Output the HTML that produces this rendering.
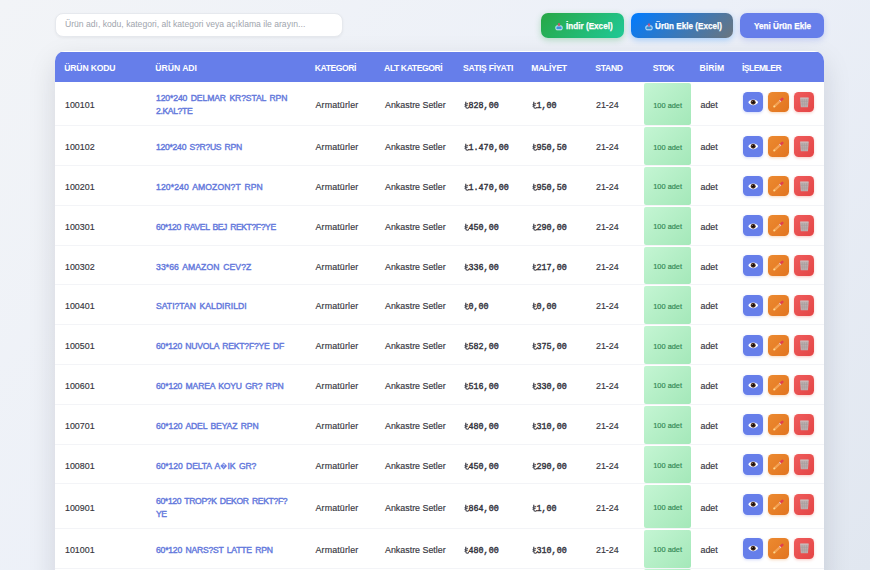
<!DOCTYPE html>
<html><head><meta charset="utf-8">
<style>
*{box-sizing:border-box;margin:0;padding:0}
html,body{width:870px;height:570px;overflow:hidden}
body{font-family:"Liberation Sans",sans-serif;background:linear-gradient(135deg,#f2f4f7 0%,#ecf0f8 50%,#e1e7f0 100%);position:relative;color:#333}
.search{position:absolute;left:55px;top:13.2px;width:287.5px;height:24.3px;background:#fff;border-radius:8px;box-shadow:0 1px 3px rgba(0,0,0,.05);border:1px solid #e6e9ee;font-size:8.6px;color:#a0a5ad;padding-left:9px;line-height:20.6px;white-space:nowrap}
.btn{position:absolute;top:13px;height:25px;border-radius:7px;color:#fff;font-weight:bold;font-size:9.6px;line-height:25px;white-space:nowrap}
.btn .ic{position:absolute;top:8.5px}
.btn .tx{position:absolute;top:-.5px;transform-origin:0 50%;transform:scaleX(.85);-webkit-text-stroke:.25px #fff}
.b1{left:541px;width:83px;background:linear-gradient(135deg,#28a745,#20c997);box-shadow:0 2px 6px rgba(40,167,69,.3)}
.b2{left:631px;width:102px;background:linear-gradient(135deg,#007bff,#6c757d);box-shadow:0 2px 6px rgba(0,123,255,.3)}
.b3{left:740px;width:84px;background:#667eea;box-shadow:0 2px 6px rgba(102,126,234,.3)}
.card{position:absolute;left:55px;top:51.3px;width:769px;height:540px;background:#fff;border-radius:10px;overflow:hidden;box-shadow:0 10px 28px rgba(20,25,40,.13)}
.head{position:absolute;left:0;top:1px;width:100%;height:29.4px;background:#667eea;color:#fff;font-weight:bold;font-size:8.6px;letter-spacing:-.15px}
.head span{position:absolute;top:11.5px;line-height:9px;white-space:nowrap}
.row{position:absolute;left:0;width:100%;border-bottom:1px solid #f3f4f7}
.row .c{position:absolute;white-space:nowrap}
.head span,.row .c,.stok,.acts{margin-left:0}
.tl{vertical-align:-.6px}
.dia{vertical-align:-1px}
.t{font-size:8.9px;color:#363640;line-height:10px;-webkit-text-stroke:.15px #363640}
.arm{letter-spacing:.14px}
.nm{color:#6479dc;font-weight:normal;font-size:8.6px;letter-spacing:.05px;word-spacing:1.2px;-webkit-text-stroke:.4px #6479dc;line-height:13px}
.mono{font-family:"Liberation Mono",monospace;font-weight:normal;font-size:8.4px;color:#34343e;-webkit-text-stroke:.4px #34343e;line-height:10px}
.stok{position:absolute;left:589.3px;width:46.7px;top:1px;bottom:0;background:linear-gradient(135deg,#c4f5d3,#a4e8b9);border-radius:2px;color:#318652;font-size:7.4px;-webkit-text-stroke:.15px #318652;display:flex;align-items:center;justify-content:center;padding-top:2px}
.acts{position:absolute;left:688px;height:20.4px;width:72px}
.ab{position:absolute;top:-.2px;width:20.4px;height:20.8px;border-radius:4.5px;display:block}
.ab svg{position:absolute;left:0;top:.2px;width:20.4px;height:20.4px}
.ab.v{left:0;background:#667eea;box-shadow:0 1px 3px rgba(102,126,234,.3)}
.ab.e{left:25.2px;background:linear-gradient(135deg,#ec8a30,#e2741f);box-shadow:0 1px 3px rgba(230,126,34,.3)}
.ab.d{left:50.6px;background:linear-gradient(135deg,#ef5b5b,#e44545);box-shadow:0 1px 3px rgba(231,76,60,.3)}
</style></head><body>
<div class="search">Ürün adı, kodu, kategori, alt kategori veya açıklama ile arayın...</div>
<div class="btn b1"><span class="tx" style="left:25px">İndir (Excel)</span><svg class="ic" style="left:13.8px" width="8" height="9" viewBox="0 0 8 9"><rect x="0.9" y="3.9" width="6.2" height="3.9" rx="1" fill="#3a93dd" stroke="#e6f6ff" stroke-width=".9"/><path d="M3.2 0.9 H4.8 V2.8 H5.6 L4 4.6 L2.4 2.8 H3.2 Z" fill="#d0506a"/></svg></div>
<div class="btn b2"><span class="tx" style="left:24px">Ürün Ekle (Excel)</span><svg class="ic" style="left:13.5px" width="8" height="9" viewBox="0 0 8 9"><rect x="0.9" y="3.9" width="6.2" height="3.9" rx="1" fill="#2f8fd8" stroke="#e6f6ff" stroke-width=".9"/><path d="M4 0.9 L5.6 2.7 H4.8 V4.4 H3.2 V2.7 H2.4 Z" fill="#c8507a"/></svg></div>
<div class="btn b3"><span class="tx" style="left:14px">Yeni Ürün Ekle</span></div>
<div class="card">
 <div class="head">
  <span style="left:9.3px;letter-spacing:-0.175px">ÜRÜN KODU</span>
  <span style="left:100.3px;letter-spacing:-0.010px">ÜRÜN ADI</span>
  <span style="left:259.8px;letter-spacing:-0.450px">KATEGORİ</span>
  <span style="left:329.1px;letter-spacing:-0.420px">ALT KATEGORİ</span>
  <span style="left:408.1px;letter-spacing:-0.240px">SATIŞ FİYATI</span>
  <span style="left:476.3px;letter-spacing:-0.320px">MALİYET</span>
  <span style="left:540.3px;letter-spacing:-0.320px">STAND</span>
  <span style="left:597.8px;letter-spacing:-0.650px">STOK</span>
  <span style="left:644.5px;letter-spacing:0.100px">BİRİM</span>
  <span style="left:687.0px;letter-spacing:-0.540px">İŞLEMLER</span>
 </div>
<div class="row" style="top:30.70px;height:44.30px">
<div class="c t" style="left:10px;top:18.25px">100101</div>
<div class="c nm" style="left:101px;top:10.40px"><span style="letter-spacing:-0.106px">120*240 DELMAR KR?STAL RPN</span><br><span style="letter-spacing:-0.364px">2.KAL?TE</span></div>
<div class="c t arm" style="left:260.5px;top:18.25px">Armatürler</div>
<div class="c t" style="left:330px;top:18.25px">Ankastre Setler</div>
<div class="c mono" style="left:408.5px;top:19.25px"><svg class="tl" width="5.04" height="8" viewBox="0 0 5.04 8"><path d="M1.8 0.8 V5.4 Q1.8 7.3 3.3 7.3 Q4.5 7.3 4.8 6.1" fill="none" stroke="#3a3a44" stroke-width="1.15"/><path d="M0.5 3.7 L4.1 2.2 M0.5 5.4 L4.1 3.9" fill="none" stroke="#3a3a44" stroke-width=".85"/></svg>828,00</div>
<div class="c mono" style="left:476.5px;top:19.25px"><svg class="tl" width="5.04" height="8" viewBox="0 0 5.04 8"><path d="M1.8 0.8 V5.4 Q1.8 7.3 3.3 7.3 Q4.5 7.3 4.8 6.1" fill="none" stroke="#3a3a44" stroke-width="1.15"/><path d="M0.5 3.7 L4.1 2.2 M0.5 5.4 L4.1 3.9" fill="none" stroke="#3a3a44" stroke-width=".85"/></svg>1,00</div>
<div class="c t" style="left:541px;top:18.25px">21-24</div>
<div class="stok"><span>100 adet</span></div>
<div class="c t" style="left:645.5px;top:18.25px">adet</div>
<div class="acts" style="top:9.75px"><i class="ab v"><svg width="20" height="20" viewBox="0 0 20 20"><path d="M5.2 10.1 C6.6 6.4 13.4 6.4 14.8 10.1 C13.4 13.8 6.6 13.8 5.2 10.1 Z" fill="#fff"/><circle cx="10" cy="10.1" r="2.45" fill="#4a2c1e"/><circle cx="10" cy="10.1" r="1.2" fill="#120c08"/><circle cx="9.2" cy="9.2" r=".45" fill="#e8d8d0"/></svg></i><i class="ab e"><svg width="20" height="20" viewBox="0 0 20 20"><path d="M6.2 14.1 L12.4 8.3" stroke="#f4a456" stroke-width="2.2" stroke-linecap="round"/><path d="M12.2 8.5 L14.1 6.7" stroke="#e2404e" stroke-width="2.5" stroke-linecap="round"/><path d="M11.4 9.2 L12.3 8.4" stroke="#f0cfb8" stroke-width="2.2"/><circle cx="6.2" cy="14.1" r=".95" fill="#fbd98f"/></svg></i><i class="ab d"><svg width="20" height="20" viewBox="0 0 20 20"><path d="M5.9 5.6 H14.5 L13.7 15 H6.7 Z" fill="#bdaeae"/><path d="M6.2 5.9 H14.2" stroke="#d3c6c6" stroke-width=".8"/><path d="M8 7 L8.5 14.3 M10.2 7 V14.3 M12.4 7 L11.9 14.3 M6.4 9.2 H14 M6.6 11.8 H13.8" stroke="#a39c9c" stroke-width=".55"/></svg></i></div>
</div>
<div class="row" style="top:75.00px;height:39.80px">
<div class="c t" style="left:10px;top:16.00px">100102</div>
<div class="c nm" style="left:101px;top:15.00px"><span style="letter-spacing:-0.268px">120*240 S?R?US RPN</span></div>
<div class="c t arm" style="left:260.5px;top:16.00px">Armatürler</div>
<div class="c t" style="left:330px;top:16.00px">Ankastre Setler</div>
<div class="c mono" style="left:408.5px;top:17.00px"><svg class="tl" width="5.04" height="8" viewBox="0 0 5.04 8"><path d="M1.8 0.8 V5.4 Q1.8 7.3 3.3 7.3 Q4.5 7.3 4.8 6.1" fill="none" stroke="#3a3a44" stroke-width="1.15"/><path d="M0.5 3.7 L4.1 2.2 M0.5 5.4 L4.1 3.9" fill="none" stroke="#3a3a44" stroke-width=".85"/></svg>1.470,00</div>
<div class="c mono" style="left:476.5px;top:17.00px"><svg class="tl" width="5.04" height="8" viewBox="0 0 5.04 8"><path d="M1.8 0.8 V5.4 Q1.8 7.3 3.3 7.3 Q4.5 7.3 4.8 6.1" fill="none" stroke="#3a3a44" stroke-width="1.15"/><path d="M0.5 3.7 L4.1 2.2 M0.5 5.4 L4.1 3.9" fill="none" stroke="#3a3a44" stroke-width=".85"/></svg>950,50</div>
<div class="c t" style="left:541px;top:16.00px">21-24</div>
<div class="stok"><span>100 adet</span></div>
<div class="c t" style="left:645.5px;top:16.00px">adet</div>
<div class="acts" style="top:9.70px"><i class="ab v"><svg width="20" height="20" viewBox="0 0 20 20"><path d="M5.2 10.1 C6.6 6.4 13.4 6.4 14.8 10.1 C13.4 13.8 6.6 13.8 5.2 10.1 Z" fill="#fff"/><circle cx="10" cy="10.1" r="2.45" fill="#4a2c1e"/><circle cx="10" cy="10.1" r="1.2" fill="#120c08"/><circle cx="9.2" cy="9.2" r=".45" fill="#e8d8d0"/></svg></i><i class="ab e"><svg width="20" height="20" viewBox="0 0 20 20"><path d="M6.2 14.1 L12.4 8.3" stroke="#f4a456" stroke-width="2.2" stroke-linecap="round"/><path d="M12.2 8.5 L14.1 6.7" stroke="#e2404e" stroke-width="2.5" stroke-linecap="round"/><path d="M11.4 9.2 L12.3 8.4" stroke="#f0cfb8" stroke-width="2.2"/><circle cx="6.2" cy="14.1" r=".95" fill="#fbd98f"/></svg></i><i class="ab d"><svg width="20" height="20" viewBox="0 0 20 20"><path d="M5.9 5.6 H14.5 L13.7 15 H6.7 Z" fill="#bdaeae"/><path d="M6.2 5.9 H14.2" stroke="#d3c6c6" stroke-width=".8"/><path d="M8 7 L8.5 14.3 M10.2 7 V14.3 M12.4 7 L11.9 14.3 M6.4 9.2 H14 M6.6 11.8 H13.8" stroke="#a39c9c" stroke-width=".55"/></svg></i></div>
</div>
<div class="row" style="top:114.80px;height:39.80px">
<div class="c t" style="left:10px;top:16.00px">100201</div>
<div class="c nm" style="left:101px;top:15.00px"><span style="letter-spacing:0.124px">120*240 AMOZON?T RPN</span></div>
<div class="c t arm" style="left:260.5px;top:16.00px">Armatürler</div>
<div class="c t" style="left:330px;top:16.00px">Ankastre Setler</div>
<div class="c mono" style="left:408.5px;top:17.00px"><svg class="tl" width="5.04" height="8" viewBox="0 0 5.04 8"><path d="M1.8 0.8 V5.4 Q1.8 7.3 3.3 7.3 Q4.5 7.3 4.8 6.1" fill="none" stroke="#3a3a44" stroke-width="1.15"/><path d="M0.5 3.7 L4.1 2.2 M0.5 5.4 L4.1 3.9" fill="none" stroke="#3a3a44" stroke-width=".85"/></svg>1.470,00</div>
<div class="c mono" style="left:476.5px;top:17.00px"><svg class="tl" width="5.04" height="8" viewBox="0 0 5.04 8"><path d="M1.8 0.8 V5.4 Q1.8 7.3 3.3 7.3 Q4.5 7.3 4.8 6.1" fill="none" stroke="#3a3a44" stroke-width="1.15"/><path d="M0.5 3.7 L4.1 2.2 M0.5 5.4 L4.1 3.9" fill="none" stroke="#3a3a44" stroke-width=".85"/></svg>950,50</div>
<div class="c t" style="left:541px;top:16.00px">21-24</div>
<div class="stok"><span>100 adet</span></div>
<div class="c t" style="left:645.5px;top:16.00px">adet</div>
<div class="acts" style="top:9.70px"><i class="ab v"><svg width="20" height="20" viewBox="0 0 20 20"><path d="M5.2 10.1 C6.6 6.4 13.4 6.4 14.8 10.1 C13.4 13.8 6.6 13.8 5.2 10.1 Z" fill="#fff"/><circle cx="10" cy="10.1" r="2.45" fill="#4a2c1e"/><circle cx="10" cy="10.1" r="1.2" fill="#120c08"/><circle cx="9.2" cy="9.2" r=".45" fill="#e8d8d0"/></svg></i><i class="ab e"><svg width="20" height="20" viewBox="0 0 20 20"><path d="M6.2 14.1 L12.4 8.3" stroke="#f4a456" stroke-width="2.2" stroke-linecap="round"/><path d="M12.2 8.5 L14.1 6.7" stroke="#e2404e" stroke-width="2.5" stroke-linecap="round"/><path d="M11.4 9.2 L12.3 8.4" stroke="#f0cfb8" stroke-width="2.2"/><circle cx="6.2" cy="14.1" r=".95" fill="#fbd98f"/></svg></i><i class="ab d"><svg width="20" height="20" viewBox="0 0 20 20"><path d="M5.9 5.6 H14.5 L13.7 15 H6.7 Z" fill="#bdaeae"/><path d="M6.2 5.9 H14.2" stroke="#d3c6c6" stroke-width=".8"/><path d="M8 7 L8.5 14.3 M10.2 7 V14.3 M12.4 7 L11.9 14.3 M6.4 9.2 H14 M6.6 11.8 H13.8" stroke="#a39c9c" stroke-width=".55"/></svg></i></div>
</div>
<div class="row" style="top:154.60px;height:39.80px">
<div class="c t" style="left:10px;top:16.00px">100301</div>
<div class="c nm" style="left:101px;top:15.00px"><span style="letter-spacing:-0.402px">60*120 RAVEL BEJ REKT?F?YE</span></div>
<div class="c t arm" style="left:260.5px;top:16.00px">Armatürler</div>
<div class="c t" style="left:330px;top:16.00px">Ankastre Setler</div>
<div class="c mono" style="left:408.5px;top:17.00px"><svg class="tl" width="5.04" height="8" viewBox="0 0 5.04 8"><path d="M1.8 0.8 V5.4 Q1.8 7.3 3.3 7.3 Q4.5 7.3 4.8 6.1" fill="none" stroke="#3a3a44" stroke-width="1.15"/><path d="M0.5 3.7 L4.1 2.2 M0.5 5.4 L4.1 3.9" fill="none" stroke="#3a3a44" stroke-width=".85"/></svg>450,00</div>
<div class="c mono" style="left:476.5px;top:17.00px"><svg class="tl" width="5.04" height="8" viewBox="0 0 5.04 8"><path d="M1.8 0.8 V5.4 Q1.8 7.3 3.3 7.3 Q4.5 7.3 4.8 6.1" fill="none" stroke="#3a3a44" stroke-width="1.15"/><path d="M0.5 3.7 L4.1 2.2 M0.5 5.4 L4.1 3.9" fill="none" stroke="#3a3a44" stroke-width=".85"/></svg>290,00</div>
<div class="c t" style="left:541px;top:16.00px">21-24</div>
<div class="stok"><span>100 adet</span></div>
<div class="c t" style="left:645.5px;top:16.00px">adet</div>
<div class="acts" style="top:9.70px"><i class="ab v"><svg width="20" height="20" viewBox="0 0 20 20"><path d="M5.2 10.1 C6.6 6.4 13.4 6.4 14.8 10.1 C13.4 13.8 6.6 13.8 5.2 10.1 Z" fill="#fff"/><circle cx="10" cy="10.1" r="2.45" fill="#4a2c1e"/><circle cx="10" cy="10.1" r="1.2" fill="#120c08"/><circle cx="9.2" cy="9.2" r=".45" fill="#e8d8d0"/></svg></i><i class="ab e"><svg width="20" height="20" viewBox="0 0 20 20"><path d="M6.2 14.1 L12.4 8.3" stroke="#f4a456" stroke-width="2.2" stroke-linecap="round"/><path d="M12.2 8.5 L14.1 6.7" stroke="#e2404e" stroke-width="2.5" stroke-linecap="round"/><path d="M11.4 9.2 L12.3 8.4" stroke="#f0cfb8" stroke-width="2.2"/><circle cx="6.2" cy="14.1" r=".95" fill="#fbd98f"/></svg></i><i class="ab d"><svg width="20" height="20" viewBox="0 0 20 20"><path d="M5.9 5.6 H14.5 L13.7 15 H6.7 Z" fill="#bdaeae"/><path d="M6.2 5.9 H14.2" stroke="#d3c6c6" stroke-width=".8"/><path d="M8 7 L8.5 14.3 M10.2 7 V14.3 M12.4 7 L11.9 14.3 M6.4 9.2 H14 M6.6 11.8 H13.8" stroke="#a39c9c" stroke-width=".55"/></svg></i></div>
</div>
<div class="row" style="top:194.40px;height:39.80px">
<div class="c t" style="left:10px;top:16.00px">100302</div>
<div class="c nm" style="left:101px;top:15.00px"><span style="letter-spacing:0.097px">33*66 AMAZON CEV?Z</span></div>
<div class="c t arm" style="left:260.5px;top:16.00px">Armatürler</div>
<div class="c t" style="left:330px;top:16.00px">Ankastre Setler</div>
<div class="c mono" style="left:408.5px;top:17.00px"><svg class="tl" width="5.04" height="8" viewBox="0 0 5.04 8"><path d="M1.8 0.8 V5.4 Q1.8 7.3 3.3 7.3 Q4.5 7.3 4.8 6.1" fill="none" stroke="#3a3a44" stroke-width="1.15"/><path d="M0.5 3.7 L4.1 2.2 M0.5 5.4 L4.1 3.9" fill="none" stroke="#3a3a44" stroke-width=".85"/></svg>336,00</div>
<div class="c mono" style="left:476.5px;top:17.00px"><svg class="tl" width="5.04" height="8" viewBox="0 0 5.04 8"><path d="M1.8 0.8 V5.4 Q1.8 7.3 3.3 7.3 Q4.5 7.3 4.8 6.1" fill="none" stroke="#3a3a44" stroke-width="1.15"/><path d="M0.5 3.7 L4.1 2.2 M0.5 5.4 L4.1 3.9" fill="none" stroke="#3a3a44" stroke-width=".85"/></svg>217,00</div>
<div class="c t" style="left:541px;top:16.00px">21-24</div>
<div class="stok"><span>100 adet</span></div>
<div class="c t" style="left:645.5px;top:16.00px">adet</div>
<div class="acts" style="top:9.70px"><i class="ab v"><svg width="20" height="20" viewBox="0 0 20 20"><path d="M5.2 10.1 C6.6 6.4 13.4 6.4 14.8 10.1 C13.4 13.8 6.6 13.8 5.2 10.1 Z" fill="#fff"/><circle cx="10" cy="10.1" r="2.45" fill="#4a2c1e"/><circle cx="10" cy="10.1" r="1.2" fill="#120c08"/><circle cx="9.2" cy="9.2" r=".45" fill="#e8d8d0"/></svg></i><i class="ab e"><svg width="20" height="20" viewBox="0 0 20 20"><path d="M6.2 14.1 L12.4 8.3" stroke="#f4a456" stroke-width="2.2" stroke-linecap="round"/><path d="M12.2 8.5 L14.1 6.7" stroke="#e2404e" stroke-width="2.5" stroke-linecap="round"/><path d="M11.4 9.2 L12.3 8.4" stroke="#f0cfb8" stroke-width="2.2"/><circle cx="6.2" cy="14.1" r=".95" fill="#fbd98f"/></svg></i><i class="ab d"><svg width="20" height="20" viewBox="0 0 20 20"><path d="M5.9 5.6 H14.5 L13.7 15 H6.7 Z" fill="#bdaeae"/><path d="M6.2 5.9 H14.2" stroke="#d3c6c6" stroke-width=".8"/><path d="M8 7 L8.5 14.3 M10.2 7 V14.3 M12.4 7 L11.9 14.3 M6.4 9.2 H14 M6.6 11.8 H13.8" stroke="#a39c9c" stroke-width=".55"/></svg></i></div>
</div>
<div class="row" style="top:234.20px;height:39.80px">
<div class="c t" style="left:10px;top:16.00px">100401</div>
<div class="c nm" style="left:101px;top:15.00px"><span style="letter-spacing:0.022px">SATI?TAN KALDIRILDI</span></div>
<div class="c t arm" style="left:260.5px;top:16.00px">Armatürler</div>
<div class="c t" style="left:330px;top:16.00px">Ankastre Setler</div>
<div class="c mono" style="left:408.5px;top:17.00px"><svg class="tl" width="5.04" height="8" viewBox="0 0 5.04 8"><path d="M1.8 0.8 V5.4 Q1.8 7.3 3.3 7.3 Q4.5 7.3 4.8 6.1" fill="none" stroke="#3a3a44" stroke-width="1.15"/><path d="M0.5 3.7 L4.1 2.2 M0.5 5.4 L4.1 3.9" fill="none" stroke="#3a3a44" stroke-width=".85"/></svg>0,00</div>
<div class="c mono" style="left:476.5px;top:17.00px"><svg class="tl" width="5.04" height="8" viewBox="0 0 5.04 8"><path d="M1.8 0.8 V5.4 Q1.8 7.3 3.3 7.3 Q4.5 7.3 4.8 6.1" fill="none" stroke="#3a3a44" stroke-width="1.15"/><path d="M0.5 3.7 L4.1 2.2 M0.5 5.4 L4.1 3.9" fill="none" stroke="#3a3a44" stroke-width=".85"/></svg>0,00</div>
<div class="c t" style="left:541px;top:16.00px">21-24</div>
<div class="stok"><span>100 adet</span></div>
<div class="c t" style="left:645.5px;top:16.00px">adet</div>
<div class="acts" style="top:9.70px"><i class="ab v"><svg width="20" height="20" viewBox="0 0 20 20"><path d="M5.2 10.1 C6.6 6.4 13.4 6.4 14.8 10.1 C13.4 13.8 6.6 13.8 5.2 10.1 Z" fill="#fff"/><circle cx="10" cy="10.1" r="2.45" fill="#4a2c1e"/><circle cx="10" cy="10.1" r="1.2" fill="#120c08"/><circle cx="9.2" cy="9.2" r=".45" fill="#e8d8d0"/></svg></i><i class="ab e"><svg width="20" height="20" viewBox="0 0 20 20"><path d="M6.2 14.1 L12.4 8.3" stroke="#f4a456" stroke-width="2.2" stroke-linecap="round"/><path d="M12.2 8.5 L14.1 6.7" stroke="#e2404e" stroke-width="2.5" stroke-linecap="round"/><path d="M11.4 9.2 L12.3 8.4" stroke="#f0cfb8" stroke-width="2.2"/><circle cx="6.2" cy="14.1" r=".95" fill="#fbd98f"/></svg></i><i class="ab d"><svg width="20" height="20" viewBox="0 0 20 20"><path d="M5.9 5.6 H14.5 L13.7 15 H6.7 Z" fill="#bdaeae"/><path d="M6.2 5.9 H14.2" stroke="#d3c6c6" stroke-width=".8"/><path d="M8 7 L8.5 14.3 M10.2 7 V14.3 M12.4 7 L11.9 14.3 M6.4 9.2 H14 M6.6 11.8 H13.8" stroke="#a39c9c" stroke-width=".55"/></svg></i></div>
</div>
<div class="row" style="top:274.00px;height:39.80px">
<div class="c t" style="left:10px;top:16.00px">100501</div>
<div class="c nm" style="left:101px;top:15.00px"><span style="letter-spacing:-0.214px">60*120 NUVOLA REKT?F?YE DF</span></div>
<div class="c t arm" style="left:260.5px;top:16.00px">Armatürler</div>
<div class="c t" style="left:330px;top:16.00px">Ankastre Setler</div>
<div class="c mono" style="left:408.5px;top:17.00px"><svg class="tl" width="5.04" height="8" viewBox="0 0 5.04 8"><path d="M1.8 0.8 V5.4 Q1.8 7.3 3.3 7.3 Q4.5 7.3 4.8 6.1" fill="none" stroke="#3a3a44" stroke-width="1.15"/><path d="M0.5 3.7 L4.1 2.2 M0.5 5.4 L4.1 3.9" fill="none" stroke="#3a3a44" stroke-width=".85"/></svg>582,00</div>
<div class="c mono" style="left:476.5px;top:17.00px"><svg class="tl" width="5.04" height="8" viewBox="0 0 5.04 8"><path d="M1.8 0.8 V5.4 Q1.8 7.3 3.3 7.3 Q4.5 7.3 4.8 6.1" fill="none" stroke="#3a3a44" stroke-width="1.15"/><path d="M0.5 3.7 L4.1 2.2 M0.5 5.4 L4.1 3.9" fill="none" stroke="#3a3a44" stroke-width=".85"/></svg>375,00</div>
<div class="c t" style="left:541px;top:16.00px">21-24</div>
<div class="stok"><span>100 adet</span></div>
<div class="c t" style="left:645.5px;top:16.00px">adet</div>
<div class="acts" style="top:9.70px"><i class="ab v"><svg width="20" height="20" viewBox="0 0 20 20"><path d="M5.2 10.1 C6.6 6.4 13.4 6.4 14.8 10.1 C13.4 13.8 6.6 13.8 5.2 10.1 Z" fill="#fff"/><circle cx="10" cy="10.1" r="2.45" fill="#4a2c1e"/><circle cx="10" cy="10.1" r="1.2" fill="#120c08"/><circle cx="9.2" cy="9.2" r=".45" fill="#e8d8d0"/></svg></i><i class="ab e"><svg width="20" height="20" viewBox="0 0 20 20"><path d="M6.2 14.1 L12.4 8.3" stroke="#f4a456" stroke-width="2.2" stroke-linecap="round"/><path d="M12.2 8.5 L14.1 6.7" stroke="#e2404e" stroke-width="2.5" stroke-linecap="round"/><path d="M11.4 9.2 L12.3 8.4" stroke="#f0cfb8" stroke-width="2.2"/><circle cx="6.2" cy="14.1" r=".95" fill="#fbd98f"/></svg></i><i class="ab d"><svg width="20" height="20" viewBox="0 0 20 20"><path d="M5.9 5.6 H14.5 L13.7 15 H6.7 Z" fill="#bdaeae"/><path d="M6.2 5.9 H14.2" stroke="#d3c6c6" stroke-width=".8"/><path d="M8 7 L8.5 14.3 M10.2 7 V14.3 M12.4 7 L11.9 14.3 M6.4 9.2 H14 M6.6 11.8 H13.8" stroke="#a39c9c" stroke-width=".55"/></svg></i></div>
</div>
<div class="row" style="top:313.80px;height:39.80px">
<div class="c t" style="left:10px;top:16.00px">100601</div>
<div class="c nm" style="left:101px;top:15.00px"><span style="letter-spacing:-0.175px">60*120 MAREA KOYU GR? RPN</span></div>
<div class="c t arm" style="left:260.5px;top:16.00px">Armatürler</div>
<div class="c t" style="left:330px;top:16.00px">Ankastre Setler</div>
<div class="c mono" style="left:408.5px;top:17.00px"><svg class="tl" width="5.04" height="8" viewBox="0 0 5.04 8"><path d="M1.8 0.8 V5.4 Q1.8 7.3 3.3 7.3 Q4.5 7.3 4.8 6.1" fill="none" stroke="#3a3a44" stroke-width="1.15"/><path d="M0.5 3.7 L4.1 2.2 M0.5 5.4 L4.1 3.9" fill="none" stroke="#3a3a44" stroke-width=".85"/></svg>516,00</div>
<div class="c mono" style="left:476.5px;top:17.00px"><svg class="tl" width="5.04" height="8" viewBox="0 0 5.04 8"><path d="M1.8 0.8 V5.4 Q1.8 7.3 3.3 7.3 Q4.5 7.3 4.8 6.1" fill="none" stroke="#3a3a44" stroke-width="1.15"/><path d="M0.5 3.7 L4.1 2.2 M0.5 5.4 L4.1 3.9" fill="none" stroke="#3a3a44" stroke-width=".85"/></svg>330,00</div>
<div class="c t" style="left:541px;top:16.00px">21-24</div>
<div class="stok"><span>100 adet</span></div>
<div class="c t" style="left:645.5px;top:16.00px">adet</div>
<div class="acts" style="top:9.70px"><i class="ab v"><svg width="20" height="20" viewBox="0 0 20 20"><path d="M5.2 10.1 C6.6 6.4 13.4 6.4 14.8 10.1 C13.4 13.8 6.6 13.8 5.2 10.1 Z" fill="#fff"/><circle cx="10" cy="10.1" r="2.45" fill="#4a2c1e"/><circle cx="10" cy="10.1" r="1.2" fill="#120c08"/><circle cx="9.2" cy="9.2" r=".45" fill="#e8d8d0"/></svg></i><i class="ab e"><svg width="20" height="20" viewBox="0 0 20 20"><path d="M6.2 14.1 L12.4 8.3" stroke="#f4a456" stroke-width="2.2" stroke-linecap="round"/><path d="M12.2 8.5 L14.1 6.7" stroke="#e2404e" stroke-width="2.5" stroke-linecap="round"/><path d="M11.4 9.2 L12.3 8.4" stroke="#f0cfb8" stroke-width="2.2"/><circle cx="6.2" cy="14.1" r=".95" fill="#fbd98f"/></svg></i><i class="ab d"><svg width="20" height="20" viewBox="0 0 20 20"><path d="M5.9 5.6 H14.5 L13.7 15 H6.7 Z" fill="#bdaeae"/><path d="M6.2 5.9 H14.2" stroke="#d3c6c6" stroke-width=".8"/><path d="M8 7 L8.5 14.3 M10.2 7 V14.3 M12.4 7 L11.9 14.3 M6.4 9.2 H14 M6.6 11.8 H13.8" stroke="#a39c9c" stroke-width=".55"/></svg></i></div>
</div>
<div class="row" style="top:353.60px;height:39.80px">
<div class="c t" style="left:10px;top:16.00px">100701</div>
<div class="c nm" style="left:101px;top:15.00px"><span style="letter-spacing:-0.135px">60*120 ADEL BEYAZ RPN</span></div>
<div class="c t arm" style="left:260.5px;top:16.00px">Armatürler</div>
<div class="c t" style="left:330px;top:16.00px">Ankastre Setler</div>
<div class="c mono" style="left:408.5px;top:17.00px"><svg class="tl" width="5.04" height="8" viewBox="0 0 5.04 8"><path d="M1.8 0.8 V5.4 Q1.8 7.3 3.3 7.3 Q4.5 7.3 4.8 6.1" fill="none" stroke="#3a3a44" stroke-width="1.15"/><path d="M0.5 3.7 L4.1 2.2 M0.5 5.4 L4.1 3.9" fill="none" stroke="#3a3a44" stroke-width=".85"/></svg>480,00</div>
<div class="c mono" style="left:476.5px;top:17.00px"><svg class="tl" width="5.04" height="8" viewBox="0 0 5.04 8"><path d="M1.8 0.8 V5.4 Q1.8 7.3 3.3 7.3 Q4.5 7.3 4.8 6.1" fill="none" stroke="#3a3a44" stroke-width="1.15"/><path d="M0.5 3.7 L4.1 2.2 M0.5 5.4 L4.1 3.9" fill="none" stroke="#3a3a44" stroke-width=".85"/></svg>310,00</div>
<div class="c t" style="left:541px;top:16.00px">21-24</div>
<div class="stok"><span>100 adet</span></div>
<div class="c t" style="left:645.5px;top:16.00px">adet</div>
<div class="acts" style="top:9.70px"><i class="ab v"><svg width="20" height="20" viewBox="0 0 20 20"><path d="M5.2 10.1 C6.6 6.4 13.4 6.4 14.8 10.1 C13.4 13.8 6.6 13.8 5.2 10.1 Z" fill="#fff"/><circle cx="10" cy="10.1" r="2.45" fill="#4a2c1e"/><circle cx="10" cy="10.1" r="1.2" fill="#120c08"/><circle cx="9.2" cy="9.2" r=".45" fill="#e8d8d0"/></svg></i><i class="ab e"><svg width="20" height="20" viewBox="0 0 20 20"><path d="M6.2 14.1 L12.4 8.3" stroke="#f4a456" stroke-width="2.2" stroke-linecap="round"/><path d="M12.2 8.5 L14.1 6.7" stroke="#e2404e" stroke-width="2.5" stroke-linecap="round"/><path d="M11.4 9.2 L12.3 8.4" stroke="#f0cfb8" stroke-width="2.2"/><circle cx="6.2" cy="14.1" r=".95" fill="#fbd98f"/></svg></i><i class="ab d"><svg width="20" height="20" viewBox="0 0 20 20"><path d="M5.9 5.6 H14.5 L13.7 15 H6.7 Z" fill="#bdaeae"/><path d="M6.2 5.9 H14.2" stroke="#d3c6c6" stroke-width=".8"/><path d="M8 7 L8.5 14.3 M10.2 7 V14.3 M12.4 7 L11.9 14.3 M6.4 9.2 H14 M6.6 11.8 H13.8" stroke="#a39c9c" stroke-width=".55"/></svg></i></div>
</div>
<div class="row" style="top:393.40px;height:39.80px">
<div class="c t" style="left:10px;top:16.00px">100801</div>
<div class="c nm" style="left:101px;top:15.00px"><span style="letter-spacing:-0.105px">60*120 DELTA A<svg class="dia" width="7.4" height="8" viewBox="0 0 7.4 8"><path d="M3.7 0.6 L7.1 4 L3.7 7.4 L0.3 4 Z" fill="#6c80e2"/><path d="M2.8 3.1 Q2.8 2.2 3.7 2.2 Q4.6 2.2 4.6 3 Q4.6 3.6 3.7 4 V4.6" fill="none" stroke="#fff" stroke-width=".7"/><circle cx="3.7" cy="5.6" r=".4" fill="#fff"/></svg>IK GR?</span></div>
<div class="c t arm" style="left:260.5px;top:16.00px">Armatürler</div>
<div class="c t" style="left:330px;top:16.00px">Ankastre Setler</div>
<div class="c mono" style="left:408.5px;top:17.00px"><svg class="tl" width="5.04" height="8" viewBox="0 0 5.04 8"><path d="M1.8 0.8 V5.4 Q1.8 7.3 3.3 7.3 Q4.5 7.3 4.8 6.1" fill="none" stroke="#3a3a44" stroke-width="1.15"/><path d="M0.5 3.7 L4.1 2.2 M0.5 5.4 L4.1 3.9" fill="none" stroke="#3a3a44" stroke-width=".85"/></svg>450,00</div>
<div class="c mono" style="left:476.5px;top:17.00px"><svg class="tl" width="5.04" height="8" viewBox="0 0 5.04 8"><path d="M1.8 0.8 V5.4 Q1.8 7.3 3.3 7.3 Q4.5 7.3 4.8 6.1" fill="none" stroke="#3a3a44" stroke-width="1.15"/><path d="M0.5 3.7 L4.1 2.2 M0.5 5.4 L4.1 3.9" fill="none" stroke="#3a3a44" stroke-width=".85"/></svg>290,00</div>
<div class="c t" style="left:541px;top:16.00px">21-24</div>
<div class="stok"><span>100 adet</span></div>
<div class="c t" style="left:645.5px;top:16.00px">adet</div>
<div class="acts" style="top:9.70px"><i class="ab v"><svg width="20" height="20" viewBox="0 0 20 20"><path d="M5.2 10.1 C6.6 6.4 13.4 6.4 14.8 10.1 C13.4 13.8 6.6 13.8 5.2 10.1 Z" fill="#fff"/><circle cx="10" cy="10.1" r="2.45" fill="#4a2c1e"/><circle cx="10" cy="10.1" r="1.2" fill="#120c08"/><circle cx="9.2" cy="9.2" r=".45" fill="#e8d8d0"/></svg></i><i class="ab e"><svg width="20" height="20" viewBox="0 0 20 20"><path d="M6.2 14.1 L12.4 8.3" stroke="#f4a456" stroke-width="2.2" stroke-linecap="round"/><path d="M12.2 8.5 L14.1 6.7" stroke="#e2404e" stroke-width="2.5" stroke-linecap="round"/><path d="M11.4 9.2 L12.3 8.4" stroke="#f0cfb8" stroke-width="2.2"/><circle cx="6.2" cy="14.1" r=".95" fill="#fbd98f"/></svg></i><i class="ab d"><svg width="20" height="20" viewBox="0 0 20 20"><path d="M5.9 5.6 H14.5 L13.7 15 H6.7 Z" fill="#bdaeae"/><path d="M6.2 5.9 H14.2" stroke="#d3c6c6" stroke-width=".8"/><path d="M8 7 L8.5 14.3 M10.2 7 V14.3 M12.4 7 L11.9 14.3 M6.4 9.2 H14 M6.6 11.8 H13.8" stroke="#a39c9c" stroke-width=".55"/></svg></i></div>
</div>
<div class="row" style="top:433.20px;height:44.30px">
<div class="c t" style="left:10px;top:18.25px">100901</div>
<div class="c nm" style="left:101px;top:10.40px"><span style="letter-spacing:-0.342px">60*120 TROP?K DEKOR REKT?F?</span><br><span style="letter-spacing:-0.550px">YE</span></div>
<div class="c t arm" style="left:260.5px;top:18.25px">Armatürler</div>
<div class="c t" style="left:330px;top:18.25px">Ankastre Setler</div>
<div class="c mono" style="left:408.5px;top:19.25px"><svg class="tl" width="5.04" height="8" viewBox="0 0 5.04 8"><path d="M1.8 0.8 V5.4 Q1.8 7.3 3.3 7.3 Q4.5 7.3 4.8 6.1" fill="none" stroke="#3a3a44" stroke-width="1.15"/><path d="M0.5 3.7 L4.1 2.2 M0.5 5.4 L4.1 3.9" fill="none" stroke="#3a3a44" stroke-width=".85"/></svg>864,00</div>
<div class="c mono" style="left:476.5px;top:19.25px"><svg class="tl" width="5.04" height="8" viewBox="0 0 5.04 8"><path d="M1.8 0.8 V5.4 Q1.8 7.3 3.3 7.3 Q4.5 7.3 4.8 6.1" fill="none" stroke="#3a3a44" stroke-width="1.15"/><path d="M0.5 3.7 L4.1 2.2 M0.5 5.4 L4.1 3.9" fill="none" stroke="#3a3a44" stroke-width=".85"/></svg>1,00</div>
<div class="c t" style="left:541px;top:18.25px">21-24</div>
<div class="stok"><span>100 adet</span></div>
<div class="c t" style="left:645.5px;top:18.25px">adet</div>
<div class="acts" style="top:9.75px"><i class="ab v"><svg width="20" height="20" viewBox="0 0 20 20"><path d="M5.2 10.1 C6.6 6.4 13.4 6.4 14.8 10.1 C13.4 13.8 6.6 13.8 5.2 10.1 Z" fill="#fff"/><circle cx="10" cy="10.1" r="2.45" fill="#4a2c1e"/><circle cx="10" cy="10.1" r="1.2" fill="#120c08"/><circle cx="9.2" cy="9.2" r=".45" fill="#e8d8d0"/></svg></i><i class="ab e"><svg width="20" height="20" viewBox="0 0 20 20"><path d="M6.2 14.1 L12.4 8.3" stroke="#f4a456" stroke-width="2.2" stroke-linecap="round"/><path d="M12.2 8.5 L14.1 6.7" stroke="#e2404e" stroke-width="2.5" stroke-linecap="round"/><path d="M11.4 9.2 L12.3 8.4" stroke="#f0cfb8" stroke-width="2.2"/><circle cx="6.2" cy="14.1" r=".95" fill="#fbd98f"/></svg></i><i class="ab d"><svg width="20" height="20" viewBox="0 0 20 20"><path d="M5.9 5.6 H14.5 L13.7 15 H6.7 Z" fill="#bdaeae"/><path d="M6.2 5.9 H14.2" stroke="#d3c6c6" stroke-width=".8"/><path d="M8 7 L8.5 14.3 M10.2 7 V14.3 M12.4 7 L11.9 14.3 M6.4 9.2 H14 M6.6 11.8 H13.8" stroke="#a39c9c" stroke-width=".55"/></svg></i></div>
</div>
<div class="row" style="top:477.50px;height:39.80px">
<div class="c t" style="left:10px;top:16.00px">101001</div>
<div class="c nm" style="left:101px;top:15.00px"><span style="letter-spacing:-0.207px">60*120 NARS?ST LATTE RPN</span></div>
<div class="c t arm" style="left:260.5px;top:16.00px">Armatürler</div>
<div class="c t" style="left:330px;top:16.00px">Ankastre Setler</div>
<div class="c mono" style="left:408.5px;top:17.00px"><svg class="tl" width="5.04" height="8" viewBox="0 0 5.04 8"><path d="M1.8 0.8 V5.4 Q1.8 7.3 3.3 7.3 Q4.5 7.3 4.8 6.1" fill="none" stroke="#3a3a44" stroke-width="1.15"/><path d="M0.5 3.7 L4.1 2.2 M0.5 5.4 L4.1 3.9" fill="none" stroke="#3a3a44" stroke-width=".85"/></svg>480,00</div>
<div class="c mono" style="left:476.5px;top:17.00px"><svg class="tl" width="5.04" height="8" viewBox="0 0 5.04 8"><path d="M1.8 0.8 V5.4 Q1.8 7.3 3.3 7.3 Q4.5 7.3 4.8 6.1" fill="none" stroke="#3a3a44" stroke-width="1.15"/><path d="M0.5 3.7 L4.1 2.2 M0.5 5.4 L4.1 3.9" fill="none" stroke="#3a3a44" stroke-width=".85"/></svg>310,00</div>
<div class="c t" style="left:541px;top:16.00px">21-24</div>
<div class="stok"><span>100 adet</span></div>
<div class="c t" style="left:645.5px;top:16.00px">adet</div>
<div class="acts" style="top:9.70px"><i class="ab v"><svg width="20" height="20" viewBox="0 0 20 20"><path d="M5.2 10.1 C6.6 6.4 13.4 6.4 14.8 10.1 C13.4 13.8 6.6 13.8 5.2 10.1 Z" fill="#fff"/><circle cx="10" cy="10.1" r="2.45" fill="#4a2c1e"/><circle cx="10" cy="10.1" r="1.2" fill="#120c08"/><circle cx="9.2" cy="9.2" r=".45" fill="#e8d8d0"/></svg></i><i class="ab e"><svg width="20" height="20" viewBox="0 0 20 20"><path d="M6.2 14.1 L12.4 8.3" stroke="#f4a456" stroke-width="2.2" stroke-linecap="round"/><path d="M12.2 8.5 L14.1 6.7" stroke="#e2404e" stroke-width="2.5" stroke-linecap="round"/><path d="M11.4 9.2 L12.3 8.4" stroke="#f0cfb8" stroke-width="2.2"/><circle cx="6.2" cy="14.1" r=".95" fill="#fbd98f"/></svg></i><i class="ab d"><svg width="20" height="20" viewBox="0 0 20 20"><path d="M5.9 5.6 H14.5 L13.7 15 H6.7 Z" fill="#bdaeae"/><path d="M6.2 5.9 H14.2" stroke="#d3c6c6" stroke-width=".8"/><path d="M8 7 L8.5 14.3 M10.2 7 V14.3 M12.4 7 L11.9 14.3 M6.4 9.2 H14 M6.6 11.8 H13.8" stroke="#a39c9c" stroke-width=".55"/></svg></i></div>
</div>
<div class="row" style="top:517.30px;height:40px"><div class="stok" style="top:.3px"></div></div>
</div>
</body></html>
